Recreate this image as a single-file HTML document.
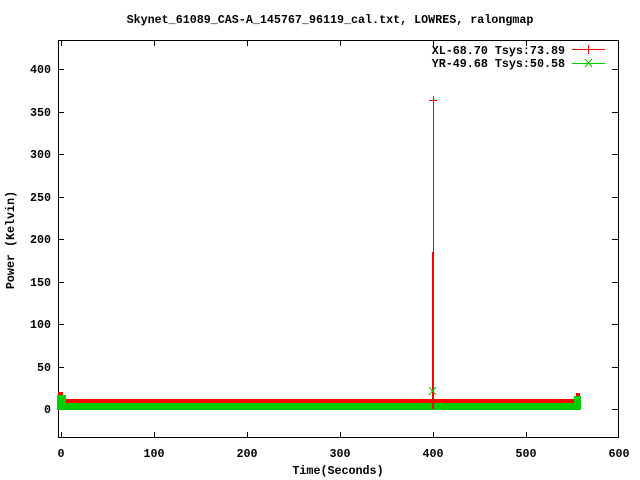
<!DOCTYPE html>
<html><head><meta charset="utf-8"><style>
html,body{margin:0;padding:0;background:#fff;width:640px;height:480px;overflow:hidden}
text{font-family:"Liberation Mono",monospace;font-weight:bold;font-size:11.7px;fill:#000}
</style></head><body>
<svg width="640" height="480" xmlns="http://www.w3.org/2000/svg" shape-rendering="crispEdges">
<rect x="58.5" y="40.5" width="560" height="397" fill="none" stroke="#000" stroke-width="1"/>
<g stroke="#000" stroke-width="1">
<!-- y ticks -->
<path d="M58 69.5h6M618 69.5h-6M58 112.5h6M618 112.5h-6M58 154.5h6M618 154.5h-6M58 197.5h6M618 197.5h-6M58 239.5h6M618 239.5h-6M58 282.5h6M618 282.5h-6M58 324.5h6M618 324.5h-6M58 367.5h6M618 367.5h-6M58 409.5h6M618 409.5h-6"/>
<!-- x ticks -->
<path d="M61.5 438v-6M61.5 40v6M154.5 438v-6M154.5 40v6M247.5 438v-6M247.5 40v6M340.5 438v-6M340.5 40v6M433.5 438v-6M433.5 40v6M526.5 438v-6M526.5 40v6"/>
</g>
<g text-anchor="end">
<text x="51" y="73">400</text><text x="51" y="116">350</text><text x="51" y="158">300</text><text x="51" y="201">250</text><text x="51" y="243">200</text><text x="51" y="286">150</text><text x="51" y="328">100</text><text x="51" y="371">50</text><text x="51" y="413">0</text>
</g>
<g text-anchor="middle">
<text x="61" y="457">0</text><text x="154" y="457">100</text><text x="247" y="457">200</text><text x="340" y="457">300</text><text x="433" y="457">400</text><text x="526" y="457">500</text><text x="619" y="457">600</text>
<text x="338" y="474">Time(Seconds)</text>
<text x="330" y="23">Skynet_61089_CAS-A_145767_96119_cal.txt, LOWRES, ralongmap</text>
</g>
<text transform="translate(14,240) rotate(-90)" text-anchor="middle">Power (Kelvin)</text>
<g text-anchor="end">
<text x="565" y="54">XL-68.70 Tsys:73.89</text>
<text x="565" y="67">YR-49.68 Tsys:50.58</text>
</g>
<g stroke="#f00"><path d="M572 49.5h33M588.5 45v9"/></g>
<g stroke="#0c0"><path d="M572 63.5h33M585 59l7 8M592 59l-7 8"/></g>
<!-- data -->
<rect x="60" y="399" width="517" height="5" fill="#f00"/>
<rect x="58" y="392" width="5" height="6" fill="#f00"/>
<rect x="576" y="393" width="4" height="5" fill="#f00"/>
<rect x="60" y="403" width="517" height="7" fill="#0c0"/>
<rect x="57" y="395" width="9" height="15" fill="#0c0"/>
<rect x="574" y="396" width="7" height="14" fill="#0c0"/>
<path d="M433.5 100v309" stroke="#f00"/>
<rect x="432" y="252" width="2" height="157" fill="#f00"/>
<path d="M429 100.5h8M433.5 96v9" stroke="#f00"/>
<path d="M429 387l7 8M436 387l-7 8" stroke="#0c0"/>
</svg>
</body></html>
